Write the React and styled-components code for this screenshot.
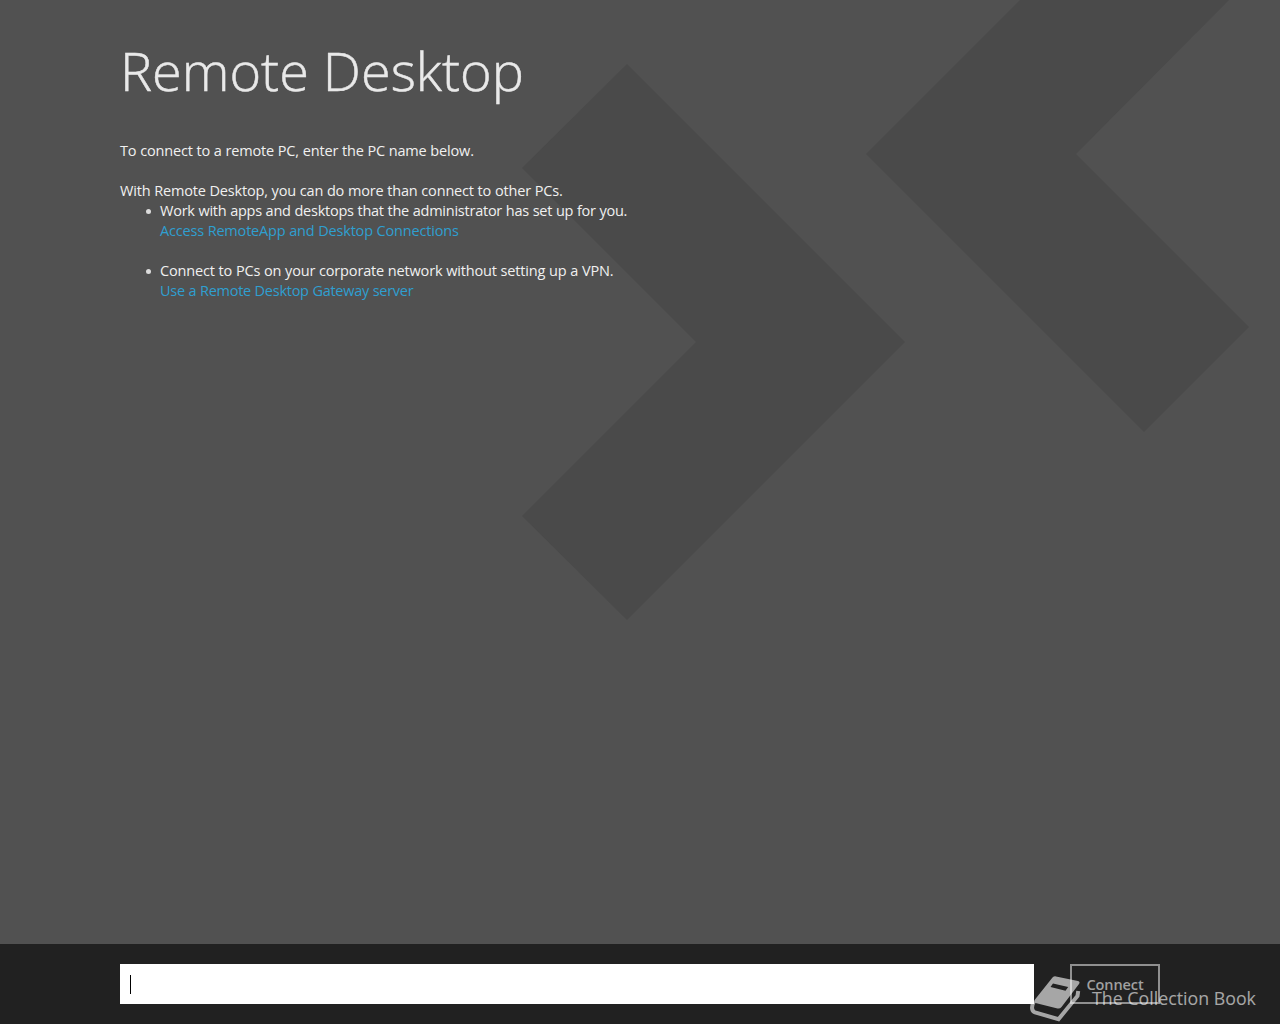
import React from 'react';
import styled, { createGlobalStyle } from 'styled-components';

function App() {
    return (
        <Screen>
            <GlobalStyle />
            <Backdrop />
            <Main>
                <Title>Remote Desktop</Title>
                <Text $gap="20px" $track="-.17px">To connect to a remote PC, enter the PC name below.</Text>
                <Text $track="-.175px">With Remote Desktop, you can do more than connect to other PCs.</Text>
                <List>
                    <Item>
                        <Text $track="-.24px">Work with apps and desktops that the administrator has set up for you.</Text>
                        <Link href="#" $track="-.19px">Access RemoteApp and Desktop Connections</Link>
                    </Item>
                    <Item>
                        <Text $track="-.165px">Connect to PCs on your corporate network without setting up a VPN.</Text>
                        <Link href="#" $track="-.27px">Use a Remote Desktop Gateway server</Link>
                    </Item>
                </List>
            </Main>
            <Bar>
                <NameField>
                    <Caret />
                </NameField>
                <ConnectButton>Connect</ConnectButton>
            </Bar>
            <Watermark>
                <BookIcon />
                <span>The Collection Book</span>
            </Watermark>
        </Screen>
    )
}

function Backdrop() {
    return (
        <Arrows viewBox="0 0 1280 944">
            <path d="M627 64 L905 342 L627 620 L522 516 L696 342 L522 168 Z" />
            <path d="M1020 0 L866 154 L1144 432 L1249 327 L1076 154 L1229 0 Z" />
        </Arrows>
    )
}

function BookIcon() {
    return (
        <svg width="52" height="48" viewBox="0 0 52 48">
            <path
                fillRule="evenodd"
                d="M22.5 1.6 Q24 0 26 .4 L48 5 Q50.5 5.8 49 8 L31.5 31 Q30 33 27.5 32.5 L5.5 27 Q3 26 5 23.5 Z M23 7.5 L20.5 11 L35.5 14.8 L38.2 11 Z"
            />
            <path
                d="M4 25.5 Q1.5 29.5 2.2 33 Q2.7 35.5 5 36.3 L28.5 43.2 L47.5 20 L48.2 15"
                fill="none"
                stroke="#fff"
                strokeWidth="4"
            />
        </svg>
    )
}

const GlobalStyle = createGlobalStyle`
    *{
        box-sizing:border-box;
        margin:0;
        padding:0;
    }
    body{
        background-color:#515151;
        font-family:'Open Sans','Noto Sans',sans-serif;
    }
`
const Screen = styled.div`
    position:relative;
    display:flex;
    flex-direction:column;
    width:1280px;
    height:1024px;
    overflow:hidden;
    background-color:#515151;
`
const Arrows = styled.svg`
    position:absolute;
    top:0;
    left:0;
    width:1280px;
    height:944px;
    fill:#4a4a4a;
`
const Main = styled.main`
    z-index:1;
    flex:1;
    padding:32px 120px 0;
    color:#f0f0f0;
`
const Title = styled.h1`
    height:109px;
    color:#e9e9e9;
    font-size:54px;
    font-weight:300;
    line-height:77px;
    letter-spacing:0;
    white-space:nowrap;
    -webkit-text-stroke:.5px #e9e9e9;
`
const Text = styled.p`
    margin-bottom:${({ $gap }) => $gap || 0};
    font-size:14.5px;
    line-height:20px;
    letter-spacing:${({ $track }) => $track};
    word-spacing:.2px;
    white-space:nowrap;
`
const List = styled.ul`
    display:flex;
    flex-direction:column;
    gap:20px;
    padding-left:40px;
    list-style:none;
`
const Item = styled.li`
    position:relative;
    &::before{
        content:'';
        position:absolute;
        top:8px;
        left:-14px;
        width:5px;
        height:5px;
        border-radius:50%;
        background-color:#dcdcdc;
    }
`
const Link = styled.a`
    display:block;
    color:#2f9fd0;
    font-size:14.5px;
    line-height:20px;
    letter-spacing:${({ $track }) => $track};
    word-spacing:.2px;
    text-decoration:none;
    white-space:nowrap;
`
const Bar = styled.footer`
    z-index:1;
    display:flex;
    justify-content:space-between;
    align-items:center;
    height:80px;
    padding:0 120px;
    background-color:#212121;
`
const NameField = styled.div`
    display:flex;
    align-items:center;
    width:914px;
    height:40px;
    padding-left:10px;
    background-color:#fff;
`
const Caret = styled.span`
    width:1px;
    height:19px;
    background-color:#000;
`
const ConnectButton = styled.button`
    width:90px;
    height:40px;
    border:2px solid #909090;
    background-color:transparent;
    color:#a0a0a0;
    font-family:inherit;
    font-size:14.5px;
    font-weight:600;
    letter-spacing:-.1px;
`
const Watermark = styled.div`
    position:absolute;
    z-index:2;
    right:24px;
    bottom:0;
    display:flex;
    align-items:center;
    gap:10px;
    width:226px;
    height:48px;
    opacity:.6;
    color:#fff;
    fill:#fff;
    font-size:17.8px;
    white-space:nowrap;
    svg{
        flex:none;
    }
    span{
        padding-bottom:4px;
    }
`
export default App;
